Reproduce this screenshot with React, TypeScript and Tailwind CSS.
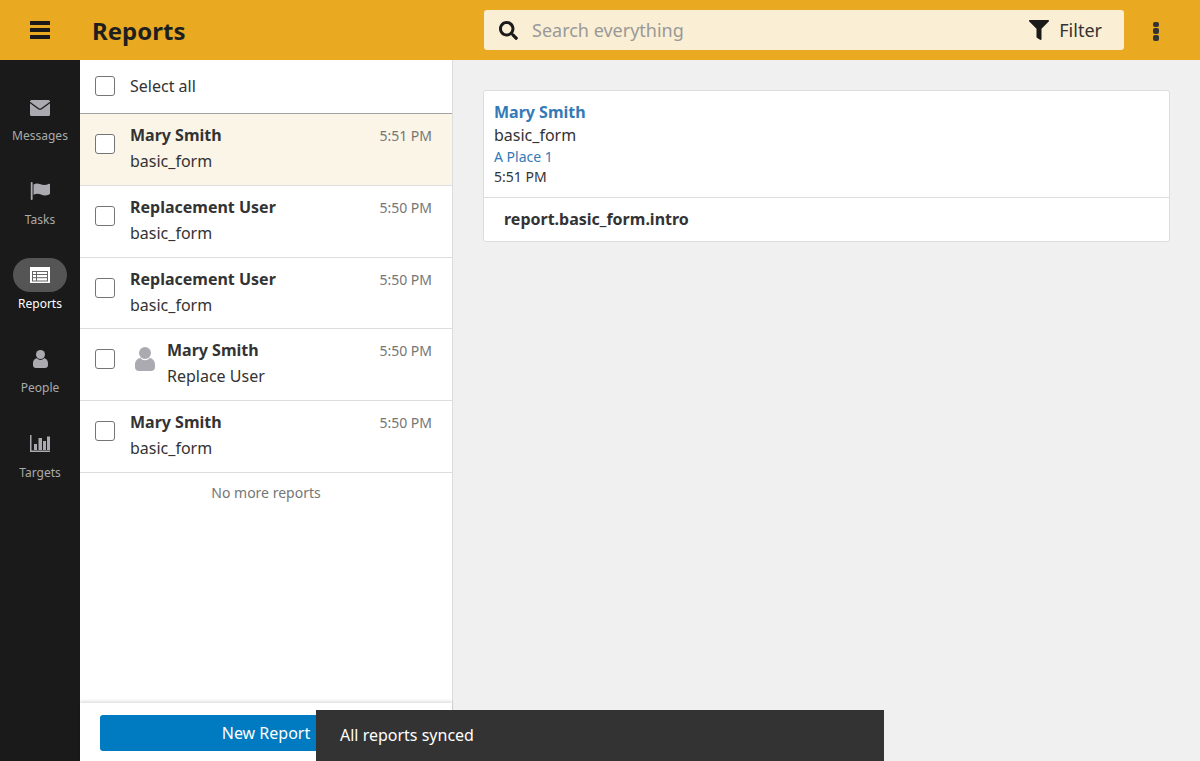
import React from "react";
import { FaSearch, FaFilter } from "react-icons/fa";

const Person = ({ className }: { className: string }) => (
  <svg viewBox="0 0 20 24" className={className} fill="currentColor">
    <circle cx="10" cy="6" r="6" />
    <path d="M0 17.500C0 14 2.500 11 5.500 11c1 1.500 2.800 2.200 4.500 2.200s3.500-.7 4.500-2.200c3 0 5.500 3 5.500 6.500V20c0 2.500-1.500 4-4 4H4c-2.500 0-4-1.500-4-4z" />
  </svg>
);

const nav = [
  {
    label: "Messages",
    icon: (
      <svg viewBox="0 0 20 16" className="w-[20px] h-[16px] mt-[1px]">
        <rect x="0" y="0" width="20" height="16" rx="1.500" fill="currentColor" />
        <path d="M0 2.500l8.500 6.200q1.500 1 3 0L20 2.500" fill="none" stroke="#1a1a1a" strokeWidth="1.300" />
      </svg>
    ),
  },
  {
    label: "Tasks",
    icon: (
      <svg viewBox="0 0 20 18" className="w-[20px] h-[18px]" fill="currentColor">
        <rect x="0.800" y="0" width="1.800" height="18" rx="0.800" />
        <path d="M3.500 2.500c2.500-1.300 4.500-1.300 7-.2 3 1.200 5.500 1 8.500-.5.600-.2 1 .1 1 .7v9c0 .5-.3.8-.8 1-3 1.200-5.700 1.200-8.200 0-2.500-1-4.800-1-7.500 .3z" />
      </svg>
    ),
  },
  {
    label: "Reports",
    active: true,
    icon: (
      <svg viewBox="0 0 20 16" className="w-[20px] h-[16px]">
        <rect x="0" y="0" width="20" height="16" fill="currentColor" />
        <rect x="2.500" y="4.500" width="15" height="9.500" fill="none" stroke="#666" strokeWidth="1" />
        <path d="M2.500 7.500h15M2.500 10.700h15M6.500 4.500v9.500" stroke="#666" strokeWidth="1" />
      </svg>
    ),
  },
  { label: "People", icon: <Person className="w-[15px] h-[18px]" /> },
  {
    label: "Targets",
    icon: (
      <svg viewBox="0 0 20 17" className="w-[20px] h-[17px]" fill="currentColor">
        <rect x="0" y="0" width="1.500" height="17" />
        <rect x="0" y="15.500" width="20" height="1.500" />
        <rect x="4" y="9" width="3" height="6" />
        <rect x="8.500" y="3" width="3.500" height="12" />
        <rect x="13" y="6" width="3" height="9" />
        <rect x="17" y="1.500" width="3" height="13.500" />
      </svg>
    ),
  },
];

const Check = () => (
  <span className="block w-[20px] h-[20px] shrink-0 bg-white border border-[#757575] rounded-[3px]" />
);

type Row = { name: string; form: string; time: string; sel?: boolean; person?: boolean };
const rows: Row[] = [
  { name: "Mary Smith", form: "basic_form", time: "5:51 PM", sel: true },
  { name: "Replacement User", form: "basic_form", time: "5:50 PM" },
  { name: "Replacement User", form: "basic_form", time: "5:50 PM" },
  { name: "Mary Smith", form: "Replace User", time: "5:50 PM", person: true },
  { name: "Mary Smith", form: "basic_form", time: "5:50 PM" },
];

export default function App() {
  return (
    <div className="relative h-[761px] w-[1200px] overflow-hidden flex flex-col text-[#333] bg-[#f0f0f0] font-['Noto_Sans',sans-serif] text-[16px]">
      <header className="h-[60px] shrink-0 flex items-center bg-[#e9aa22]">
        <div className="w-[80px] flex justify-center">
          <div className="w-[20px] flex flex-col gap-[3px]">
            <span className="h-[4px] bg-[#1a1a1a]" />
            <span className="h-[4px] bg-[#1a1a1a]" />
            <span className="h-[4px] bg-[#1a1a1a]" />
          </div>
        </div>
        <h1 className="w-[392px] pl-[12px] pt-[1px] text-[24px] font-bold text-[#1f1f1f]">Reports</h1>
        <div className="w-[640px] h-[40px] ml-[12px] flex items-center bg-[#faeed4] rounded-[3px] pl-[15px] pr-[22px]">
          <FaSearch className="w-[19px] h-[19px] text-[#1a1a1a]" />
          <span className="ml-[14px] text-[18px] text-[#999]">Search everything</span>
          <FaFilter className="ml-auto w-[20px] h-[20px] text-[#1a1a1a]" />
          <span className="ml-[10px] text-[18px] text-[#333]">Filter</span>
        </div>
        <div className="ml-[29px] mt-[2px] flex flex-col gap-[1px]">
          <span className="w-[6px] h-[5px] rounded-[2px] bg-[#333]" />
          <span className="w-[6px] h-[6px] rounded-[2px] bg-[#333]" />
          <span className="w-[6px] h-[6px] rounded-[2px] bg-[#333]" />
        </div>
      </header>
      <div className="flex-1 flex min-h-0">
        <nav className="w-[80px] shrink-0 bg-[#1a1a1a] pt-[30px] flex flex-col text-[#aaaab0]">
          {nav.map((n) => (
            <div key={n.label} className="h-[84.15px] flex flex-col items-center">
              <div className={`w-[54px] h-[34px] flex items-center justify-center rounded-[17px] ${n.active ? "bg-[#555] text-white" : ""}`}>
                {n.icon}
              </div>
              <span className={`mt-[3px] text-[12px] leading-[18px] ${n.active ? "text-white" : "text-[#aaa]"}`}>{n.label}</span>
            </div>
          ))}
        </nav>
        <section className="w-[373px] shrink-0 bg-white border-r border-[#ddd] flex flex-col">
          <div className="h-[54px] shrink-0 flex items-center pl-[15px] pb-[2px] border-b border-[#a3a3a3]">
            <Check />
            <span className="ml-[15px] text-[#333]">Select all</span>
          </div>
          {rows.map((r, i) => (
            <div key={i} className={`h-[71.75px] shrink-0 flex border-b border-[#ddd] pl-[15px] pr-[20px] ${r.sel ? "bg-[#faf5e6]" : ""}`}>
              <div className="pt-[20px]"><Check /></div>
              {r.person && (
                <div className="ml-[20px] pt-[18px] text-[#aaaab0]"><Person className="w-[20px] h-[24px]" /></div>
              )}
              <div className={`${r.person ? "ml-[12px]" : "ml-[15px]"} flex-1 pt-[9px]`}>
                <div className="flex justify-between items-center h-[24px]">
                  <span className="font-bold text-[#333]">{r.name}</span>
                  <span className="mt-[1px] text-[14px] text-[#767676]">{r.time}</span>
                </div>
                <div className="mt-[2px] leading-[24px] text-[#333]">{r.form}</div>
              </div>
            </div>
          ))}
          <div className="pt-[10px] text-center text-[14px] leading-[20px] text-[#767676]">No more reports</div>
          <div className="mt-auto h-[58px] shrink-0 shadow-[0_-2px_3px_rgba(0,0,0,0.12)] px-[20px] pt-[12px]">
            <button className="w-full h-[36px] bg-[#007ac0] text-white rounded-[3px]">New Report</button>
          </div>
        </section>
        <main className="flex-1 pt-[30px] pl-[30px] pr-[30px]">
          <div className="bg-white border border-[#ddd] rounded-[3px]">
            <div className="pl-[10px] pt-[9px] pb-[10px] border-b border-[#ddd]">
              <div className="font-bold leading-[24px] text-[#337ab7]">Mary Smith</div>
              <div className="leading-[22px] text-[#333]">basic_form</div>
              <div className="text-[14px] leading-[20px] mt-[1px] text-[#337ab7]">A Place 1</div>
              <div className="text-[14px] leading-[20px] text-[#333]">5:51 PM</div>
            </div>
            <div className="pl-[20px] h-[43px] pb-[2px] flex items-center font-bold text-[#333]">report.basic_form.intro</div>
          </div>
        </main>
      </div>
      <div className="absolute left-[316px] bottom-0 w-[568px] h-[51px] bg-[#333] text-white flex items-center pl-[24px] pb-[2px]">All reports synced</div>
    </div>
  );
}
